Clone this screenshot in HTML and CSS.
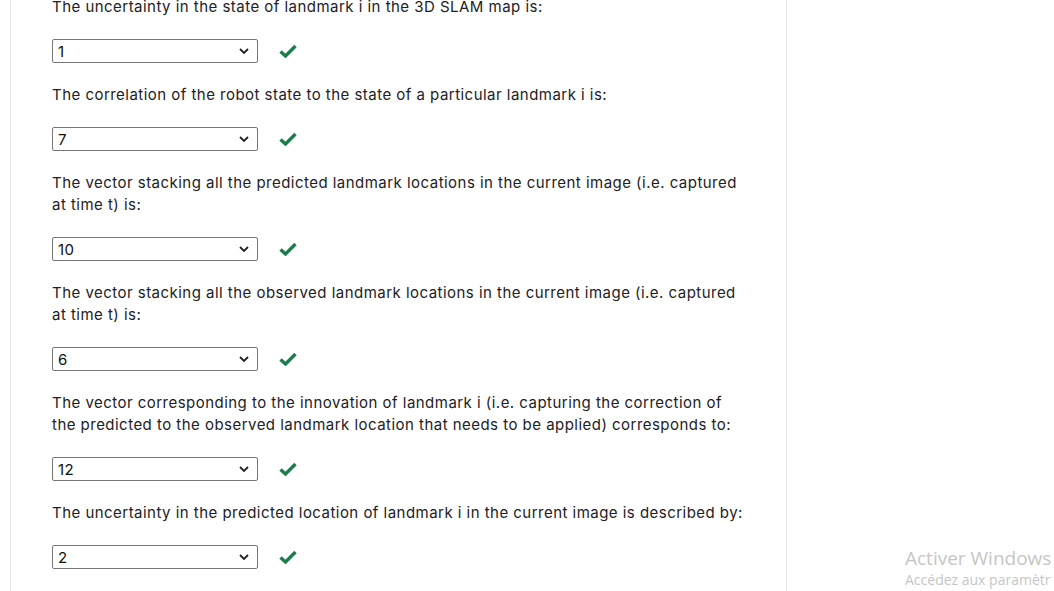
FILE: index.html
```html
<!DOCTYPE html>
<html lang="en">
<head>
<meta charset="utf-8">
<link rel="stylesheet" href="styles.css">
</head>
<body>
<div class="page">
  <div class="content">
    <div class="q">
      <p class="qtext">The uncertainty in the state of landmark i in the 3D SLAM map is:</p>
      <div class="answer"><div class="sel"><span>1</span><svg class="chev" viewBox="0 0 10 6" width="10" height="6"><path d="M1 1 L5 5 L9 1" fill="none" stroke="#222" stroke-width="1.8"/></svg></div><svg class="ok" viewBox="0 0 18 14" width="18" height="14"><path d="M1.5 7.5 L6.5 12 L16.5 2" fill="none" stroke="#1b7d4b" stroke-width="3.4"/></svg></div>
    </div>
    <div class="q">
      <p class="qtext">The correlation of the robot state to the state of a particular landmark i is:</p>
      <div class="answer"><div class="sel"><span>7</span><svg class="chev" viewBox="0 0 10 6" width="10" height="6"><path d="M1 1 L5 5 L9 1" fill="none" stroke="#222" stroke-width="1.8"/></svg></div><svg class="ok" viewBox="0 0 18 14" width="18" height="14"><path d="M1.5 7.5 L6.5 12 L16.5 2" fill="none" stroke="#1b7d4b" stroke-width="3.4"/></svg></div>
    </div>
    <div class="q">
      <p class="qtext">The vector stacking all the predicted landmark locations in the current image (i.e. captured at time t) is:</p>
      <div class="answer"><div class="sel"><span>10</span><svg class="chev" viewBox="0 0 10 6" width="10" height="6"><path d="M1 1 L5 5 L9 1" fill="none" stroke="#222" stroke-width="1.8"/></svg></div><svg class="ok" viewBox="0 0 18 14" width="18" height="14"><path d="M1.5 7.5 L6.5 12 L16.5 2" fill="none" stroke="#1b7d4b" stroke-width="3.4"/></svg></div>
    </div>
    <div class="q">
      <p class="qtext">The vector stacking all the observed landmark locations in the current image (i.e. captured at time t) is:</p>
      <div class="answer"><div class="sel"><span>6</span><svg class="chev" viewBox="0 0 10 6" width="10" height="6"><path d="M1 1 L5 5 L9 1" fill="none" stroke="#222" stroke-width="1.8"/></svg></div><svg class="ok" viewBox="0 0 18 14" width="18" height="14"><path d="M1.5 7.5 L6.5 12 L16.5 2" fill="none" stroke="#1b7d4b" stroke-width="3.4"/></svg></div>
    </div>
    <div class="q">
      <p class="qtext">The vector corresponding to the innovation of landmark i (i.e. capturing the correction of the predicted to the observed landmark location that needs to be applied) corresponds to:</p>
      <div class="answer"><div class="sel"><span>12</span><svg class="chev" viewBox="0 0 10 6" width="10" height="6"><path d="M1 1 L5 5 L9 1" fill="none" stroke="#222" stroke-width="1.8"/></svg></div><svg class="ok" viewBox="0 0 18 14" width="18" height="14"><path d="M1.5 7.5 L6.5 12 L16.5 2" fill="none" stroke="#1b7d4b" stroke-width="3.4"/></svg></div>
    </div>
    <div class="q">
      <p class="qtext">The uncertainty in the predicted location of landmark i in the current image is described by:</p>
      <div class="answer"><div class="sel"><span>2</span><svg class="chev" viewBox="0 0 10 6" width="10" height="6"><path d="M1 1 L5 5 L9 1" fill="none" stroke="#222" stroke-width="1.8"/></svg></div><svg class="ok" viewBox="0 0 18 14" width="18" height="14"><path d="M1.5 7.5 L6.5 12 L16.5 2" fill="none" stroke="#1b7d4b" stroke-width="3.4"/></svg></div>
    </div>
  </div>
</div>
<div class="watermark">
  <div class="wm-title">Activer Windows</div>
  <div class="wm-sub">Accédez aux paramètr</div>
</div>
</body>
</html>
```

FILE: styles.css
```css
html, body {
  margin: 0;
  padding: 0;
  background: #fff;
  overflow: hidden;
  height: 591px;
}
body {
  font-family: Inter, "Liberation Sans", sans-serif;
  color: #1d2125;
}
.page {
  display: flow-root;
  margin-left: 10px;
  width: 775px;
  height: 591px;
  border-left: 1px solid #e6e6e6;
  border-right: 1px solid #e6e6e6;
  box-sizing: content-box;
  overflow: hidden;
}
.content {
  padding-left: 41px;
  padding-right: 40px;
  margin-top: -4px;
}
.qtext {
  margin: 0;
  font-size: 15px;
  line-height: 22px;
  letter-spacing: 0.47px;
}
.answer {
  display: flex;
  align-items: center;
  margin: 21px 0 21px;
  height: 24px;
}
.sel {
  width: 206px;
  height: 24px;
  box-sizing: border-box;
  border: 1px solid #767676;
  border-radius: 2px;
  display: flex;
  align-items: center;
  justify-content: space-between;
  padding: 0 8px 0 5px;
  font-size: 15px;
  letter-spacing: 0.3px;
  color: #111;
}
.ok {
  margin-left: 21px;
}
.watermark {
  position: absolute;
  left: 905px;
  top: 545px;
  color: #c6c6c6;
  font-family: "Open Sans", "Liberation Sans", sans-serif;
  white-space: nowrap;
}
.wm-title {
  font-size: 19px;
  line-height: 26px;
}
.wm-sub {
  font-size: 14px;
  line-height: 18px;
}
```
